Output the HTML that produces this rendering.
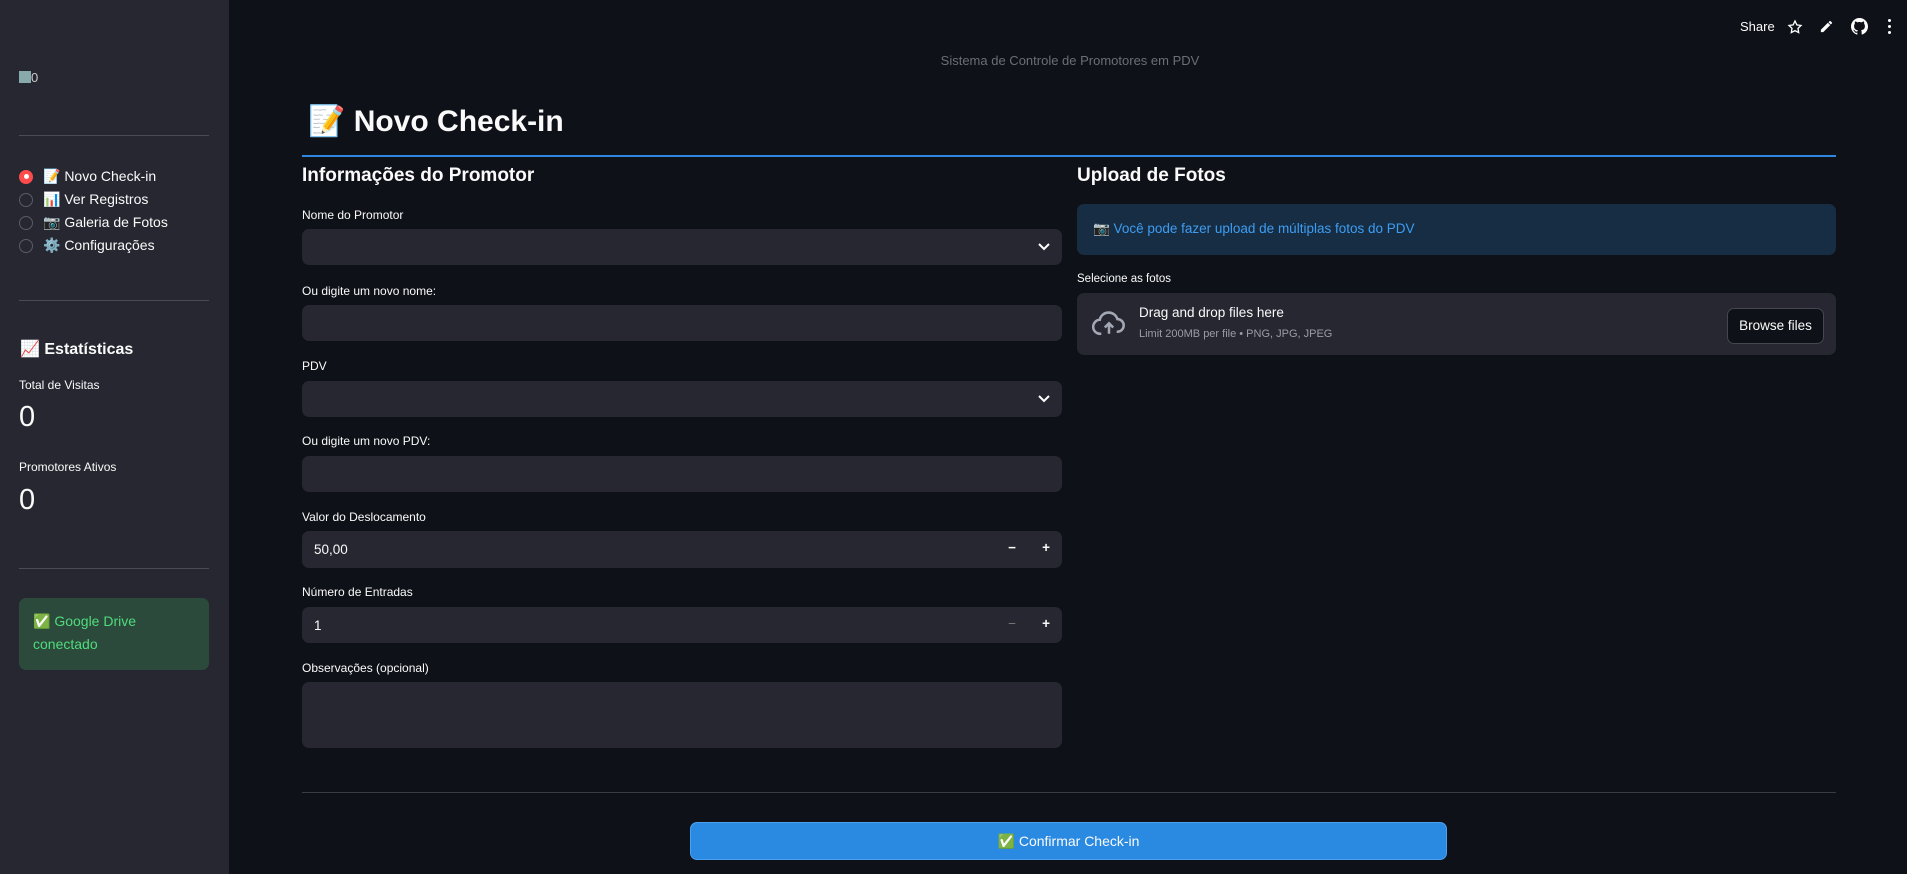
<!DOCTYPE html>
<html><head><meta charset="utf-8"><style>
*{box-sizing:border-box;margin:0;padding:0}
body{width:1907px;height:874px;background:#0e1117;font-family:"Liberation Sans",sans-serif;color:#fafafa;position:relative;overflow:hidden}
.a{position:absolute}
.sb{left:0;top:0;width:229px;height:874px;background:#262730}
.hr{height:1px;background:#4a4c55}
.lbl{font-size:12px;color:#fafafa}
.in{background:#262730;border-radius:7px}
.radio{width:14px;height:14px;border-radius:50%;border:1px solid #5a5c66}
.nav{font-size:14px}
</style></head><body>
<div class="a sb">
  <div class="a" style="left:19px;top:70px;font-size:13px;color:#ccc"><span style="display:inline-block;width:12px;height:12px;background:#8aa;vertical-align:-1px"></span>0</div>
  <div class="a hr" style="left:19px;top:135px;width:190px"></div>
  <div class="a" style="left:19px;top:165px">
    <div style="height:23px;display:flex;align-items:center"><span class="radio" style="background:#ff4b4b;border-color:#ff4b4b;display:inline-flex;align-items:center;justify-content:center"><span style="width:5px;height:5px;background:#fff;border-radius:50%"></span></span><span class="nav" style="margin-left:10px">📝 Novo Check-in</span></div>
    <div style="height:23px;display:flex;align-items:center"><span class="radio"></span><span class="nav" style="margin-left:10px">📊 Ver Registros</span></div>
    <div style="height:23px;display:flex;align-items:center"><span class="radio"></span><span class="nav" style="margin-left:10px">📷 Galeria de Fotos</span></div>
    <div style="height:23px;display:flex;align-items:center"><span class="radio"></span><span class="nav" style="margin-left:10px">⚙️ Configurações</span></div>
  </div>
  <div class="a hr" style="left:19px;top:300px;width:190px"></div>
  <div class="a" style="left:20px;top:339px;font-size:16px;font-weight:bold">📈 Estatísticas</div>
  <div class="a lbl" style="left:19px;top:378px">Total de Visitas</div>
  <div class="a" style="left:19px;top:401px;font-size:29px">0</div>
  <div class="a lbl" style="left:19px;top:460px">Promotores Ativos</div>
  <div class="a" style="left:19px;top:484px;font-size:29px">0</div>
  <div class="a hr" style="left:19px;top:568px;width:190px"></div>
  <div class="a" style="left:19px;top:598px;width:190px;height:72px;background:#2c4a3c;border-radius:7px;color:#4fdc7c;font-size:14px;line-height:23px;padding:12px 14px">✅ Google Drive conectado</div>
</div>

<div class="a" style="left:1740px;top:19px;font-size:13px">Share</div>
<svg class="a" style="left:1787px;top:19px" width="16" height="16" viewBox="0 0 24 24" fill="none" stroke="#fff" stroke-width="2"><path d="M12 3l2.8 5.8 6.2.9-4.5 4.4 1 6.2L12 17.4 6.5 20.3l1-6.2L3 9.7l6.2-.9z"/></svg>
<svg class="a" style="left:1819px;top:19px" width="15" height="15" viewBox="0 0 24 24" fill="#fff"><path d="M3 17.2V21h3.8L18 9.8 14.2 6zM20.7 7a1 1 0 000-1.4l-2.3-2.3a1 1 0 00-1.4 0l-1.8 1.8 3.7 3.7z"/></svg>
<svg class="a" style="left:1851px;top:18px" width="17" height="17" viewBox="0 0 16 16" fill="#fff"><path d="M8 0C3.6 0 0 3.6 0 8c0 3.5 2.3 6.5 5.5 7.6.4.1.5-.2.5-.4v-1.4c-2.2.5-2.7-1-2.7-1-.4-.9-.9-1.2-.9-1.2-.7-.5.1-.5.1-.5.8.1 1.2.8 1.2.8.7 1.2 1.900.9 2.3.7.1-.5.3-.9.5-1.1-1.8-.2-3.6-.9-3.6-4 0-.9.3-1.6.8-2.1-.1-.2-.4-1 .1-2.1 0 0 .7-.2 2.2.8.6-.2 1.3-.3 2-.3s1.4.1 2 .3c1.5-1 2.2-.8 2.2-.8.4 1.1.2 1.9.1 2.1.5.6.8 1.3.8 2.1 0 3.1-1.9 3.7-3.6 3.9.3.3.5.8.5 1.5v2.2c0 .2.1.5.6.4C13.7 14.5 16 11.5 16 8c0-4.4-3.6-8-8-8z"/></svg>
<div class="a" style="left:1888px;top:19px;width:4px">
  <div style="width:3px;height:3px;background:#fff;border-radius:50%;margin-bottom:3px"></div><div style="width:3px;height:3px;background:#fff;border-radius:50%;margin-bottom:3px"></div><div style="width:3px;height:3px;background:#fff;border-radius:50%"></div></div>

<div class="a" style="left:0;width:2140px;top:53px;text-align:center;font-size:13px;color:#6b6e78">Sistema de Controle de Promotores em PDV</div>
<div class="a" style="left:308px;top:104px;font-size:30px;font-weight:bold">📝 Novo Check-in</div>
<div class="a" style="left:302px;top:155px;width:1534px;height:2px;background:#2e86de"></div>

<div class="a" style="left:302px;top:165px;font-size:19px;font-weight:bold">Informações do Promotor</div>
<div class="a lbl" style="left:302px;top:208px">Nome do Promotor</div>
<div class="a in" style="left:302px;top:229px;width:760px;height:36px"><svg class="a" style="right:12px;top:13px" width="12" height="10" viewBox="0 0 12 8" fill="none" stroke="#fff" stroke-width="2"><path d="M1 1l5 5 5-5"/></svg></div>
<div class="a lbl" style="left:302px;top:284px">Ou digite um novo nome:</div>
<div class="a in" style="left:302px;top:305px;width:760px;height:36px"></div>
<div class="a lbl" style="left:302px;top:359px">PDV</div>
<div class="a in" style="left:302px;top:381px;width:760px;height:36px"><svg class="a" style="right:12px;top:13px" width="12" height="10" viewBox="0 0 12 8" fill="none" stroke="#fff" stroke-width="2"><path d="M1 1l5 5 5-5"/></svg></div>
<div class="a lbl" style="left:302px;top:434px">Ou digite um novo PDV:</div>
<div class="a in" style="left:302px;top:456px;width:760px;height:36px"></div>
<div class="a lbl" style="left:302px;top:510px">Valor do Deslocamento</div>
<div class="a in" style="left:302px;top:531px;width:760px;height:37px;font-size:13.5px;padding:11px 12px">50,00<span class="a" style="right:46px;top:9px;font-weight:bold">−</span><span class="a" style="right:12px;top:9px;font-weight:bold">+</span></div>
<div class="a lbl" style="left:302px;top:585px">Número de Entradas</div>
<div class="a in" style="left:302px;top:607px;width:760px;height:36px;font-size:13.5px;padding:11px 12px">1<span class="a" style="right:46px;top:9px;color:#777">−</span><span class="a" style="right:12px;top:9px;font-weight:bold">+</span></div>
<div class="a lbl" style="left:302px;top:661px">Observações (opcional)</div>
<div class="a in" style="left:302px;top:682px;width:760px;height:66px"></div>

<div class="a" style="left:1077px;top:165px;font-size:19px;font-weight:bold">Upload de Fotos</div>
<div class="a" style="left:1077px;top:204px;width:759px;height:51px;background:#172d43;border-radius:7px;color:#3d9df3;font-size:13.5px;padding:17px 16px">📷 Você pode fazer upload de múltiplas fotos do PDV</div>
<div class="a lbl" style="left:1077px;top:273px;font-size:11.5px">Selecione as fotos</div>
<div class="a in" style="left:1077px;top:293px;width:759px;height:62px">
  <svg class="a" style="left:15px;top:17px" width="34" height="28" viewBox="0 0 24 20" fill="none" stroke="#a3a8b4" stroke-width="1.8"><path d="M6.5 17H6a5 5 0 01-.6-10A6.5 6.5 0 0118 6.5a4.5 4.5 0 010 9H17.5"/><path d="M12 17v-7M9 12.5l3-3 3 3"/></svg>
  <div class="a" style="left:62px;top:12px;font-size:13.5px">Drag and drop files here</div>
  <div class="a" style="left:62px;top:35px;font-size:11px;color:#9a9ca6">Limit 200MB per file • PNG, JPG, JPEG</div>
  <div class="a" style="left:650px;top:15px;width:97px;height:36px;border:1px solid #444650;border-radius:7px;background:#0e1117;font-size:13.5px;text-align:center;line-height:34px">Browse files</div>
</div>

<div class="a" style="left:302px;top:792px;width:1534px;height:1px;background:#3a3c44"></div>
<div class="a" style="left:690px;top:822px;width:757px;height:38px;background:#2a8ae2;border:1px solid #4ca0f0;border-radius:7px;text-align:center;line-height:36px;font-size:14px">✅ Confirmar Check-in</div>
</body></html>
